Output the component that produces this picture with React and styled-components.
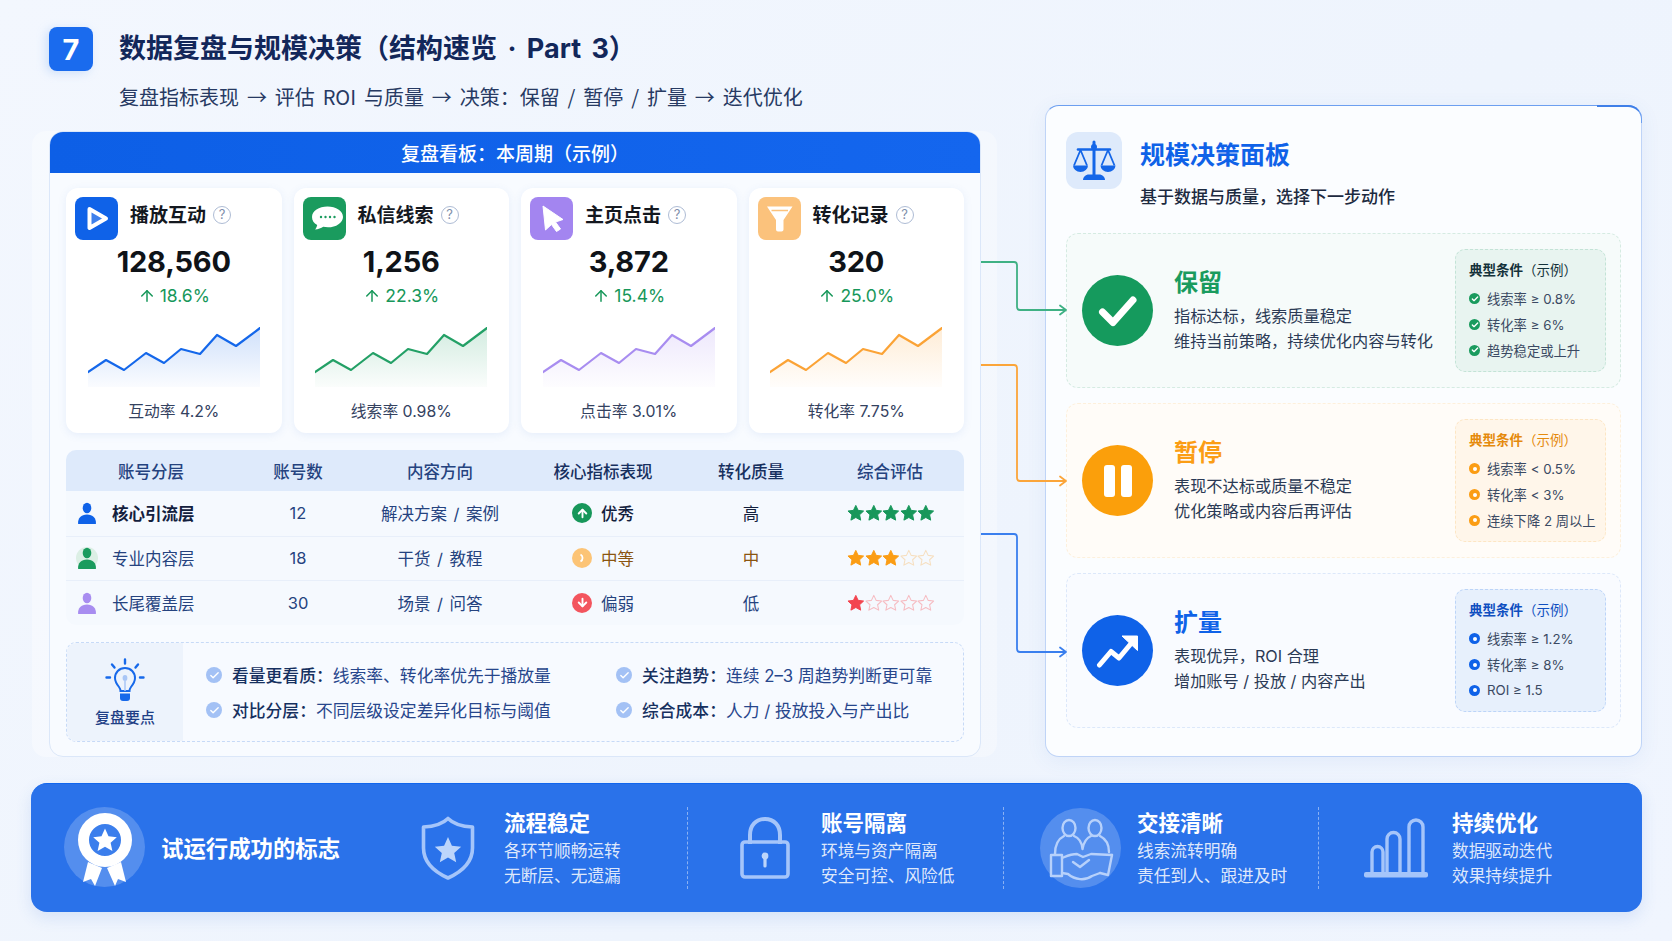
import React, { useId } from 'react';
import styled, { createGlobalStyle } from 'styled-components';
import { ArrowUp, ArrowDown, Check } from 'lucide-react';

const GlobalStyle = createGlobalStyle`
  html, body {
    margin: 0;
    padding: 0;
    background: #eff5fd;
  }
  * {
    box-sizing: border-box;
  }
  body {
    font-family: Inter, "Noto Sans CJK SC", "Noto Sans", sans-serif;
    color: #1b2a4a;
  }
`;

const Page = styled.div`
  width: 1672px;
  height: 941px;
  overflow: hidden;
  background: linear-gradient(135deg, #f3f7fe 0%, #eef4fd 60%, #f0f5fe 100%);
`;

const Header = styled.header`
  height: 105px;
  padding: 27px 0 0 49px;
`;

const TitleRow = styled.div`
  display: flex;
  align-items: center;
  gap: 26px;
`;

const StepBadge = styled.div`
  width: 44px;
  height: 44px;
  border-radius: 8px;
  background: #1a6bee;
  color: #fff;
  font-size: 29px;
  font-weight: 700;
  display: flex;
  align-items: center;
  justify-content: center;
  box-shadow: -3px 2px 10px rgba(150, 190, 245, 0.4);
`;

const Title = styled.h1`
  margin: 0;
  font-size: 27px;
  line-height: 44px;
  font-weight: 700;
  word-spacing: 4px;
  color: #12275a;
`;

const Subtitle = styled.p`
  margin: 17px 0 0 70px;
  font-family: "Noto Sans CJK SC", Inter, sans-serif;
  font-size: 20px;
  line-height: 18px;
  word-spacing: 3.4px;
  color: #273a63;
`;

const Main = styled.main`
  position: relative;
  display: flex;
  align-items: stretch;
  height: 652px;
  padding-left: 49px;
  gap: 64px;
`;

const Connectors = styled.svg`
  position: absolute;
  left: 0;
  top: 0;
  pointer-events: none;
  z-index: 2;
`;

const BoardPanel = styled.section`
  width: 932px;
  margin-top: 26px;
  border-radius: 14px;
  border: 1px solid #dbe7f9;
  background: #f8fbff;
  box-shadow: -17px 0 0 rgba(255, 255, 255, 0.35), 16px 0 0 rgba(255, 255, 255, 0.3);
  overflow: hidden;
`;

const BoardHeading = styled.div`
  height: 41px;
  background: linear-gradient(90deg, #0d5fe6, #1466ee);
  color: #fff;
  font-size: 19px;
  font-weight: 500;
  display: flex;
  align-items: center;
  justify-content: center;
`;

const BoardBody = styled.div`
  padding: 15px 16px 0;
`;

const KpiRow = styled.div`
  display: grid;
  grid-template-columns: repeat(4, 1fr);
  gap: 12px;
`;

const KpiCard = styled.article`
  height: 245px;
  padding-top: 9px;
  border-radius: 12px;
  background: #fff;
  box-shadow: 0 2px 8px rgba(70, 120, 210, 0.1);
  display: flex;
  flex-direction: column;
  align-items: center;
`;

const KpiHead = styled.div`
  align-self: stretch;
  display: flex;
  align-items: center;
  padding-left: 9px;
`;

const KpiIcon = styled.div`
  width: 43px;
  height: 43px;
  border-radius: 8px;
  background: ${p => p.$bg};
  flex: none;
  display: flex;
  margin-right: 12px;
`;

const KpiName = styled.span`
  font-size: 19px;
  font-weight: 700;
  color: #14181f;
  margin: 0 7px 10px 0;
`;

const HelpMark = styled.span`
  width: 18px;
  height: 18px;
  margin-bottom: 7px;
  border-radius: 50%;
  border: 1.6px solid #aebcd5;
  color: #7f8fab;
  font-size: 13px;
  line-height: 15px;
  text-align: center;
`;

const KpiValue = styled.div`
  margin-top: 5px;
  font-size: 29px;
  line-height: 34px;
  font-weight: 700;
  letter-spacing: -0.2px;
  color: #0f1318;
`;

const KpiDelta = styled.div`
  margin-top: 6px;
  font-size: 17.5px;
  line-height: 22px;
  color: #17975a;
  display: flex;
  align-items: center;
  gap: 4px;
`;

const ChartWrap = styled.svg`
  display: block;
  margin-top: 20px;
`;

const KpiFoot = styled.div`
  margin-top: 13px;
  font-size: 15.8px;
  line-height: 22px;
  color: #34425f;
`;

const AccountTable = styled.div`
  margin-top: 17px;
  border-radius: 10px;
  overflow: hidden;
  background: #f5f9fe;
`;

const TableLine = styled.div`
  display: grid;
  grid-template-columns: 170px 124px 160px 166px 130px 148px;
  align-items: center;
  height: ${p => (p.$head ? '41px' : '44.6px')};
  background: ${p => (p.$head ? '#deeafb' : 'transparent')};
  font-size: 16.5px;
  word-spacing: 2px;
  color: #25437f;
  font-weight: ${p => (p.$head ? 500 : 400)};
  & + & + & {
    border-top: 1px solid #e8effa;
  }
`;

const Cell = styled.div`
  text-align: center;
  color: ${p => p.$color || 'inherit'};
`;

const LayerCell = styled.div`
  display: flex;
  align-items: center;
  padding-left: 10px;
  gap: 14px;
  font-weight: ${p => (p.$strong ? 700 : 400)};
  color: ${p => (p.$strong ? '#13203d' : 'inherit')};
`;

const RatingCell = styled.div`
  display: flex;
  align-items: center;
  justify-content: center;
  gap: 9px;
  color: ${p => p.$color};
  font-weight: ${p => (p.$strong ? 500 : 400)};
`;

const RatingDot = styled.span`
  width: 20px;
  height: 20px;
  border-radius: 50%;
  background: ${p => p.$bg};
  color: #fff;
  display: flex;
  align-items: center;
  justify-content: center;
`;

const Stars = styled.div`
  display: flex;
  justify-content: center;
  padding-left: 2px;
`;

const TipBox = styled.div`
  margin-top: 17px;
  height: 100px;
  display: flex;
  border: 1.5px dashed #c7daf7;
  border-radius: 10px;
  background: #f7faff;
  overflow: hidden;
`;

const TipLabel = styled.div`
  width: 116px;
  flex: none;
  background: #edf3fc;
  display: flex;
  flex-direction: column;
  align-items: center;
  padding-top: 15px;
  font-size: 15px;
  font-weight: 500;
  color: #1f3f86;
  gap: 2px;
`;

const TipGrid = styled.div`
  flex: 1;
  display: grid;
  grid-template-columns: 410px 1fr;
  grid-auto-rows: 35px;
  align-content: center;
  padding: 2px 0 0 23px;
`;

const TipItem = styled.div`
  display: flex;
  align-items: center;
  gap: 10px;
  font-size: 16.8px;
  color: #27468c;
  white-space: nowrap;
  b {
    font-weight: 500;
    color: #16305f;
  }
`;

const TipCheck = styled.span`
  width: 16px;
  height: 16px;
  border-radius: 50%;
  background: #a3c1f5;
  color: #fff;
  display: flex;
  align-items: center;
  justify-content: center;
  flex: none;
`;

const DecisionPanel = styled.aside`
  position: relative;
  width: 597px;
  border-radius: 14px;
  border: 1px solid #bfd4f7;
  border-top: 1.5px solid #6c9ff0;
  background: #fbfdff;
  padding: 26px 20px 0;
  box-shadow: 0 4px 20px rgba(70, 120, 210, 0.08);
  &::before {
    content: '';
    position: absolute;
    top: -1.5px;
    right: -1px;
    width: 44px;
    height: 16px;
    border-top: 2px solid #3f7fe8;
    border-right: 1.5px solid #6c9ff0;
    border-radius: 0 14px 0 0;
  }
`;

const DecisionHead = styled.div`
  display: flex;
  align-items: flex-start;
  gap: 18px;
  margin-bottom: 24px;
`;

const ScaleBox = styled.div`
  width: 56px;
  height: 57px;
  border-radius: 12px;
  background: #deeafb;
  flex: none;
`;

const DecisionTitle = styled.h2`
  margin: 5px 0 0;
  font-size: 25px;
  line-height: 36px;
  font-weight: 700;
  color: #0f62e8;
`;

const DecisionSub = styled.p`
  margin: 12px 0 0;
  font-size: 17px;
  line-height: 24px;
  font-weight: 500;
  color: #1d2a40;
`;

const DecisionList = styled.div`
  display: flex;
  flex-direction: column;
  gap: 15px;
`;

const DecisionCard = styled.article`
  height: 155px;
  display: flex;
  align-items: center;
  padding: 0 14px 0 15px;
  border-radius: 12px;
  border: 1.5px dashed ${p => p.$line};
  background: ${p => p.$bg};
`;

const DecisionCircle = styled.div`
  width: 71px;
  height: 71px;
  border-radius: 50%;
  background: ${p => p.$bg};
  flex: none;
  display: flex;
  align-items: center;
  justify-content: center;
  margin-right: 21px;
`;

const DecisionBody = styled.div`
  flex: 1;
  margin-top: -1px;
`;

const DecisionName = styled.div`
  font-size: 24px;
  line-height: 32px;
  font-weight: 700;
  color: ${p => p.$color};
  margin-bottom: 5px;
`;

const DecisionLine = styled.div`
  font-size: 16.2px;
  line-height: 25px;
  color: #2b3a55;
  white-space: nowrap;
`;

const CondBox = styled.div`
  width: 151px;
  height: 123px;
  flex: none;
  border-radius: 10px;
  border: 1.5px dashed ${p => p.$line};
  background: ${p => p.$bg};
  padding: 10px 0 0 13px;
`;

const CondTitle = styled.div`
  font-size: 13.5px;
  line-height: 20px;
  color: ${p => p.$color};
  margin-bottom: 6px;
  white-space: nowrap;
  b {
    font-weight: 700;
  }
`;

const CondItem = styled.div`
  display: flex;
  align-items: center;
  gap: 7px;
  height: 25.7px;
  font-size: 13.3px;
  color: #3b4a63;
  white-space: nowrap;
`;

const CondDot = styled.span`
  width: 11px;
  height: 11px;
  border-radius: 50%;
  background: ${p => p.$bg};
  color: #fff;
  flex: none;
  display: flex;
  align-items: center;
  justify-content: center;
  ${p => !p.$tick && `
    &::after {
      content: '';
      width: 4px;
      height: 4px;
      border-radius: 50%;
      background: #fff;
    }
  `}
`;

const FooterBar = styled.footer`
  margin: 26px 0 0 31px;
  width: 1611px;
  height: 129px;
  border-radius: 16px;
  border-top: 1px solid #1166ee;
  background: #2a72ea;
  box-shadow: 0 6px 16px rgba(60, 110, 210, 0.14);
  display: flex;
  align-items: center;
  color: #fff;
`;

const FooterHero = styled.div`
  width: 340px;
  flex: none;
  display: flex;
  align-items: center;
  gap: 16px;
  padding: 0 0 2px 33px;
  font-size: 22.4px;
  font-weight: 700;
  white-space: nowrap;
`;

const Halo = styled.div`
  width: 81px;
  height: 80px;
  border-radius: 50%;
  background: ${p => (p.$on ? 'rgba(255, 255, 255, 0.2)' : 'transparent')};
  flex: none;
  display: flex;
  align-items: center;
  justify-content: center;
`;

const FooterItem = styled.div`
  width: ${p => p.$w}px;
  flex: none;
  display: flex;
  align-items: center;
  padding-left: 36px;
  gap: 16px;
`;

const FooterDivider = styled.div`
  width: 0;
  height: 82px;
  flex: none;
  border-left: 1px dashed rgba(255, 255, 255, 0.45);
`;

const FooterName = styled.div`
  font-size: 21.5px;
  line-height: 30px;
  font-weight: 700;
  margin-bottom: 1.5px;
`;

const FooterLine = styled.div`
  font-size: 16.7px;
  line-height: 24.5px;
  color: rgba(255, 255, 255, 0.86);
  white-space: nowrap;
`;

const CHART_POINTS = [[0, 45], [18, 33], [36, 43], [58, 26], [76, 36], [93, 22], [112, 27], [129, 8], [148, 19], [172, 1]];

function Sparkline({ color }) {
  const id = useId();
  const line = CHART_POINTS.map(p => p.join(',')).join(' ');
  return (
    <ChartWrap width="172" height="61" viewBox="0 0 172 61">
      <defs>
        <linearGradient id={id} x1="0" y1="0" x2="0" y2="1">
          <stop offset="0" stopColor={color} stopOpacity="0.2" />
          <stop offset="1" stopColor={color} stopOpacity="0.02" />
        </linearGradient>
      </defs>
      <polygon points={`0,60 ${line} 172,60`} fill={`url(#${id})`} />
      <polyline points={line} fill="none" stroke={color} strokeWidth="2.2" strokeLinejoin="round" strokeLinecap="round" />
    </ChartWrap>
  );
}

const PlayGlyph = () => (
  <svg width="43" height="43" viewBox="0 0 43 43">
    <path d="M14.5 12 L31 21.5 L14.5 31 Z" fill="rgba(255,255,255,0.2)" stroke="#fff" strokeWidth="4" strokeLinejoin="round" />
  </svg>
);

const ChatGlyph = () => (
  <svg width="43" height="43" viewBox="0 0 43 43">
    <path d="M24.5 9.5c8.500 0 15.500 4.600 15.500 10.400 0 5.800-7 10.400-15 10.400-1.700 0-3.300-.2-4.800-.5-2 1.400-5 2.600-8.200 2.800 1-1.200 1.900-2.800 2.200-4.600C10.900 26.300 9 23.300 9 19.900 9 14.100 16 9.500 24.500 9.500z" fill="#fff" />
    <g fill="#1a9b5e">
      <circle cx="18" cy="20" r="1.200" />
      <circle cx="22.500" cy="20" r="1.200" />
      <circle cx="27" cy="20" r="1.200" />
      <circle cx="31.500" cy="20" r="1.200" />
    </g>
  </svg>
);

const CursorGlyph = () => (
  <svg width="43" height="43" viewBox="0 0 43 43">
    <path d="M13 9 L33 22.500 L25.500 25 L30.500 32 L26.500 34.500 L21.500 27.500 L15.500 33 Z" fill="#fff" stroke="#fff" strokeWidth="1" strokeLinejoin="round" />
  </svg>
);

const FunnelGlyph = () => (
  <svg width="43" height="43" viewBox="0 0 43 43">
    <path d="M9 9.500h25.500l-9 13.500v9.500a2 2 0 0 1-2 2h-3.500a2 2 0 0 1-2-2V23z" fill="#fff" />
    <path d="M13.500 13.500h16.500" stroke="#fbc27c" strokeWidth="1.600" />
  </svg>
);

const PersonGlyph = ({ color, halo }) => (
  <svg width="22" height="22" viewBox="0 0 22 22">
    {halo && <ellipse cx="11" cy="11" rx="11" ry="11" fill={halo} />}
    <ellipse cx="11" cy="6" rx="4.300" ry="5.200" fill={color} />
    <path d="M2 21.500c0-5.500 3-9 9-9s9 3.500 9 9c0 .3-.2.500-.5.500h-17c-.3 0-.5-.2-.5-.5z" fill={color} />
  </svg>
);

const StarGlyph = ({ color, filled }) => (
  <svg width="17.600" height="18" viewBox="0 0 18 18">
    <path
      d="M9 1.200l2.400 5.100 5.600.7-4.100 3.800 1.100 5.500L9 13.600l-5 2.700 1.100-5.500L1 7l5.600-.7z"
      fill={filled ? color : 'none'}
      stroke={color}
      strokeWidth={filled ? 1 : 1.100}
      strokeLinejoin="round"
    />
  </svg>
);

const BulbGlyph = () => (
  <svg width="44" height="46" viewBox="0 0 44 46" fill="none">
    <path d="M22 10c-6 0-10 4.500-10 10 0 4 2 6.500 4 9 1 1.300 1.500 2.500 1.500 4h9c0-1.500.5-2.700 1.500-4 2-2.500 4-5 4-9 0-5.500-4-10-10-10z" stroke="#1769ea" strokeWidth="2" />
    <ellipse cx="22" cy="20" rx="2.400" ry="3" fill="#a9c6f6" />
    <path d="M22 23v10" stroke="#a9c6f6" strokeWidth="1.500" />
    <path d="M17 35.500h10v4.500a3 3 0 0 1-3 3h-4a3 3 0 0 1-3-3z" fill="#1769ea" />
    <path d="M22 1.500v4M9 6.500l2.500 3M35 6.500l-2.500 3M3.500 19.500h3.500M37 19.500h3.500" stroke="#1769ea" strokeWidth="2.400" strokeLinecap="round" />
  </svg>
);

const ScaleGlyph = () => (
  <svg width="56" height="57" viewBox="0 0 56 57" fill="none">
    <path d="M28 10v33" stroke="#1466e8" strokeWidth="3" strokeLinecap="round" />
    <path d="M12 17.500h32" stroke="#1466e8" strokeWidth="2.600" strokeLinecap="round" />
    <circle cx="28" cy="15" r="3" fill="#1466e8" />
    <path d="M14.500 18 L8 33.500M14.500 18 L21 33.500M42 18 L35.500 33.500M42 18 L48.500 33.500" stroke="#1466e8" strokeWidth="1.800" />
    <path d="M7 33.500h15a7.500 6.500 0 0 1-15 0zM34.500 33.500h15a7.500 6.500 0 0 1-15 0z" fill="#1466e8" />
    <path d="M17 48c0-3 2.500-5.500 6-5.500h10c3.500 0 6 2.500 6 5.500z" fill="#1466e8" />
  </svg>
);

const CheckGlyph = () => (
  <svg width="40" height="34" viewBox="0 0 40 34" fill="none">
    <path d="M4.500 18 L15 28.500 L35 6" stroke="#fff" strokeWidth="7" strokeLinecap="round" strokeLinejoin="round" />
  </svg>
);

const PauseGlyph = () => (
  <svg width="30" height="34" viewBox="0 0 30 34">
    <rect x="1" y="1" width="11" height="32" rx="3" fill="#fff" />
    <rect x="18" y="1" width="11" height="32" rx="3" fill="#fff" />
  </svg>
);

const GrowthGlyph = () => (
  <svg width="44" height="36" viewBox="0 0 44 36" fill="none">
    <path d="M3.500 32 L15 18.500 L23 25 L38 7" stroke="#fff" strokeWidth="5" strokeLinecap="round" strokeLinejoin="round" />
    <path d="M26 3h15.500v14.500z" fill="#fff" stroke="#fff" strokeLinejoin="round" />
  </svg>
);

const MedalGlyph = () => (
  <svg width="81" height="80" viewBox="0 0 81 80">
    <path d="M24 55 L38 61 L31 79 L27 72 L19 75 Z" fill="#fff" />
    <path d="M57 55 L43 61 L51 79 L54 72 L62 75 Z" fill="#fff" />
    <circle cx="41" cy="33" r="21.500" fill="#3b7eec" stroke="#fff" strokeWidth="11" />
    <path d="M41 21.500l3.500 7.800 8.300.9-6.200 5.600 1.800 8.200-7.400-4.300-7.400 4.300 1.800-8.200-6.200-5.600 8.300-.9z" fill="#fff" />
  </svg>
);

const ShieldGlyph = () => (
  <svg width="56" height="64" viewBox="0 0 56 64" fill="none">
    <path d="M28 2.500c5 5 13 8 24.500 8.500v21c0 14-9 23-24.500 30C12.500 55 3.500 46 3.500 32V11C15 10.500 23 7.500 28 2.500z" stroke="#a5c5fa" strokeWidth="3.600" strokeLinejoin="round" />
    <path d="M28 21l3.900 8.700 9.300 1-7 6.300 2 9.300-8.200-4.800-8.200 4.800 2-9.300-7-6.300 9.300-1z" fill="#bcd5fb" />
  </svg>
);

const LockGlyph = () => (
  <svg width="50" height="62" viewBox="0 0 50 62" fill="none">
    <path d="M10 27V18C10 8.500 16 2 25 2s15 6.500 15 16v9" stroke="#a5c5fa" strokeWidth="4" />
    <rect x="2" y="25" width="46" height="35" rx="3" stroke="#a5c5fa" strokeWidth="3.600" />
    <circle cx="25" cy="39" r="3.400" fill="#bcd5fb" />
    <path d="M25 40v9" stroke="#bcd5fb" strokeWidth="3.200" strokeLinecap="round" />
  </svg>
);

const HandshakeGlyph = () => (
  <svg width="81" height="80" viewBox="0 0 81 80" fill="none" stroke="#b7d1fb" strokeWidth="2.400" strokeLinejoin="round" strokeLinecap="round">
    <ellipse cx="29" cy="20" rx="6.500" ry="8" />
    <ellipse cx="55" cy="20" rx="6.500" ry="8" />
    <path d="M15 46c0-9 3-15 9-18M34 28c5 2 8 7 8.500 13M42.500 41c1-6 4-11 8.500-13M60 28c6 3 9 9 9 16" />
    <path d="M11 47h11v21H11z" />
    <path d="M72 47l-4 20-8-2" />
    <path d="M22 50c5-2 9-4 15-4l6 3 8-3 21 1" />
    <path d="M22 65l6 1c7 6 17 7 24 2l8-3" />
    <path d="M33 54l7 5 9-7" />
  </svg>
);

const BarsGlyph = () => (
  <svg width="66" height="60" viewBox="0 0 66 60" fill="none">
    <path d="M9 55V34a5.500 5.500 0 0 1 11 0v21M24 55V21a6.500 6.500 0 0 1 13 0v34M46 55V9a7 7 0 0 1 14 0v46" stroke="#a5c5fa" strokeWidth="3.400" />
    <rect x="1" y="54" width="64" height="5.500" rx="2" fill="#a5c5fa" />
  </svg>
);

const KPIS = [
  { name: '播放互动', value: '128,560', delta: '18.6%', foot: '互动率 4.2%', bg: '#0f62e8', color: '#1467ea', icon: <PlayGlyph /> },
  { name: '私信线索', value: '1,256', delta: '22.3%', foot: '线索率 0.98%', bg: '#1a9b5e', color: '#23a066', icon: <ChatGlyph /> },
  { name: '主页点击', value: '3,872', delta: '15.4%', foot: '点击率 3.01%', bg: '#a385f0', color: '#a88df0', icon: <CursorGlyph /> },
  { name: '转化记录', value: '320', delta: '25.0%', foot: '转化率 7.75%', bg: '#fbc27c', color: '#fba336', icon: <FunnelGlyph /> },
];

const LAYERS = [
  {
    name: '核心引流层', count: '12', dir: '解决方案 / 案例', rating: '优秀', quality: '高', strong: true,
    person: '#0f62e8', dot: '#17975a', ratingColor: '#13203d', qualityColor: '#13203d',
    starColor: '#17975a', offColor: '#17975a', filled: 5,
    mark: <ArrowUp size={13} strokeWidth={3.500} />,
  },
  {
    name: '专业内容层', count: '18', dir: '干货 / 教程', rating: '中等', quality: '中',
    person: '#1a9b5e', halo: '#dcefe5', dot: '#fcc476', ratingColor: '#8a5510', qualityColor: '#8a5510',
    starColor: '#fb9d14', offColor: '#f6dfc0', filled: 3,
    mark: <svg width="10" height="10" viewBox="0 0 10 10" fill="none"><path d="M3.500 1.500a4 4 0 0 1 0 7" stroke="#fff" strokeWidth="1.800" /></svg>,
  },
  {
    name: '长尾覆盖层', count: '30', dir: '场景 / 问答', rating: '偏弱', quality: '低',
    person: '#a88df0', dot: '#f3555e', ratingColor: '#25437f', qualityColor: '#25437f',
    starColor: '#f3454f', offColor: '#f6bcc2', filled: 1,
    mark: <ArrowDown size={13} strokeWidth={3.500} />,
  },
];

const TIPS = [
  ['看量更看质', '线索率、转化率优先于播放量'],
  ['关注趋势', '连续 2–3 周趋势判断更可靠'],
  ['对比分层', '不同层级设定差异化目标与阈值'],
  ['综合成本', '人力 / 投放投入与产出比'],
];

const DECISIONS = [
  {
    name: '保留', color: '#1a9b5e', line: '#d5ebe2', bg: '#f6fbfa',
    condLine: '#c3e3d6', condBg: '#e8f4f0', condColor: '#14323a', dot: '#1a9b5e', tick: true,
    circle: '#159a5d', glyph: <CheckGlyph />,
    lines: ['指标达标，线索质量稳定', '维持当前策略，持续优化内容与转化'],
    conds: ['线索率 ≥ 0.8%', '转化率 ≥ 6%', '趋势稳定或上升'],
  },
  {
    name: '暂停', color: '#fb9d14', line: '#fdf0dc', bg: '#fffcf8',
    condLine: '#fde6c4', condBg: '#fff6ea', condColor: '#e58a0c', dot: '#fb9d14',
    circle: '#fb9f0b', glyph: <PauseGlyph />,
    lines: ['表现不达标或质量不稳定', '优化策略或内容后再评估'],
    conds: ['线索率 < 0.5%', '转化率 < 3%', '连续下降 2 周以上'],
  },
  {
    name: '扩量', color: '#0f62e8', line: '#dce8fa', bg: '#f9fbff',
    condLine: '#bcd4f8', condBg: '#e7f0fc', condColor: '#0f4fc0', dot: '#0f62e8',
    circle: '#0f62e8', glyph: <GrowthGlyph />,
    lines: ['表现优异，ROI 合理', '增加账号 / 投放 / 内容产出'],
    conds: ['线索率 ≥ 1.2%', '转化率 ≥ 8%', 'ROI ≥ 1.5'],
  },
];

const FOOTER_ITEMS = [
  { w: 316, name: '流程稳定', lines: ['各环节顺畅运转', '无断层、无遗漏'], glyph: <ShieldGlyph /> },
  { w: 315, name: '账号隔离', lines: ['环境与资产隔离', '安全可控、风险低'], glyph: <LockGlyph /> },
  { w: 314, name: '交接清晰', lines: ['线索流转明确', '责任到人、跟进及时'], glyph: <HandshakeGlyph />, halo: true },
  { w: 323, name: '持续优化', lines: ['数据驱动迭代', '效果持续提升'], glyph: <BarsGlyph /> },
];

function ConnectorLine({ d, color, y }) {
  return (
    <g fill="none" stroke={color} strokeWidth="1.800" strokeLinejoin="round">
      <path d={d} />
      <path d={`M1060 ${y - 4.500} L1066 ${y} L1060 ${y + 4.500}`} strokeLinecap="round" />
    </g>
  );
}

function App() {
  return (
    <Page>
      <GlobalStyle />
      <Header>
        <TitleRow>
          <StepBadge>7</StepBadge>
          <Title>数据复盘与规模决策（结构速览 · Part 3）</Title>
        </TitleRow>
        <Subtitle>复盘指标表现 → 评估 ROI 与质量 → 决策：保留 / 暂停 / 扩量 → 迭代优化</Subtitle>
      </Header>

      <Main>
        <BoardPanel>
          <BoardHeading>复盘看板：本周期（示例）</BoardHeading>
          <BoardBody>
            <KpiRow>
              {KPIS.map(k => (
                <KpiCard key={k.name}>
                  <KpiHead>
                    <KpiIcon $bg={k.bg}>{k.icon}</KpiIcon>
                    <KpiName>{k.name}</KpiName>
                    <HelpMark>?</HelpMark>
                  </KpiHead>
                  <KpiValue>{k.value}</KpiValue>
                  <KpiDelta><ArrowUp size={18} strokeWidth={2} />{k.delta}</KpiDelta>
                  <Sparkline color={k.color} />
                  <KpiFoot>{k.foot}</KpiFoot>
                </KpiCard>
              ))}
            </KpiRow>

            <AccountTable>
              <TableLine $head>
                <Cell>账号分层</Cell>
                <Cell>账号数</Cell>
                <Cell>内容方向</Cell>
                <Cell $color="#17305f">核心指标表现</Cell>
                <Cell $color="#17305f">转化质量</Cell>
                <Cell>综合评估</Cell>
              </TableLine>
              {LAYERS.map(l => (
                <TableLine key={l.name}>
                  <LayerCell $strong={l.strong}>
                    <PersonGlyph color={l.person} halo={l.halo} />
                    {l.name}
                  </LayerCell>
                  <Cell>{l.count}</Cell>
                  <Cell>{l.dir}</Cell>
                  <RatingCell $color={l.ratingColor} $strong={l.strong}>
                    <RatingDot $bg={l.dot}>{l.mark}</RatingDot>
                    {l.rating}
                  </RatingCell>
                  <Cell $color={l.qualityColor}>{l.quality}</Cell>
                  <Stars>
                    {[0, 1, 2, 3, 4].map(i => (
                      <StarGlyph key={i} filled={i < l.filled} color={i < l.filled ? l.starColor : l.offColor} />
                    ))}
                  </Stars>
                </TableLine>
              ))}
            </AccountTable>

            <TipBox>
              <TipLabel>
                <BulbGlyph />
                复盘要点
              </TipLabel>
              <TipGrid>
                {TIPS.map(t => (
                  <TipItem key={t[0]}>
                    <TipCheck><Check size={11} strokeWidth={3} /></TipCheck>
                    <span><b>{t[0]}：</b>{t[1]}</span>
                  </TipItem>
                ))}
              </TipGrid>
            </TipBox>
          </BoardBody>
        </BoardPanel>

        <DecisionPanel>
          <DecisionHead>
            <ScaleBox><ScaleGlyph /></ScaleBox>
            <div>
              <DecisionTitle>规模决策面板</DecisionTitle>
              <DecisionSub>基于数据与质量，选择下一步动作</DecisionSub>
            </div>
          </DecisionHead>
          <DecisionList>
            {DECISIONS.map(d => (
              <DecisionCard key={d.name} $line={d.line} $bg={d.bg}>
                <DecisionCircle $bg={d.circle}>{d.glyph}</DecisionCircle>
                <DecisionBody>
                  <DecisionName $color={d.color}>{d.name}</DecisionName>
                  {d.lines.map(t => <DecisionLine key={t}>{t}</DecisionLine>)}
                </DecisionBody>
                <CondBox $line={d.condLine} $bg={d.condBg}>
                  <CondTitle $color={d.condColor}><b>典型条件</b>（示例）</CondTitle>
                  {d.conds.map(c => (
                    <CondItem key={c}>
                      <CondDot $bg={d.dot} $tick={d.tick}>{d.tick && <Check size={8} strokeWidth={4} />}</CondDot>
                      {c}
                    </CondItem>
                  ))}
                </CondBox>
              </DecisionCard>
            ))}
          </DecisionList>
        </DecisionPanel>

        <Connectors width="1672" height="652" viewBox="0 0 1672 652">
          <ConnectorLine color="#3fb184" d="M981 157 H1014 Q1017 157 1017 160 V202 Q1017 205 1020 205 H1066" y={205} />
          <ConnectorLine color="#fba53a" d="M981 260 H1014 Q1017 260 1017 263 V373 Q1017 376 1020 376 H1066" y={376} />
          <ConnectorLine color="#3a7fee" d="M981 429 H1014 Q1017 429 1017 432 V544 Q1017 547 1020 547 H1066" y={547} />
        </Connectors>
      </Main>

      <FooterBar>
        <FooterHero>
          <Halo $on><MedalGlyph /></Halo>
          试运行成功的标志
        </FooterHero>
        {FOOTER_ITEMS.map((f, i) => (
          <React.Fragment key={f.name}>
            {i > 0 && <FooterDivider />}
            <FooterItem $w={f.w}>
              <Halo $on={f.halo}>{f.glyph}</Halo>
              <div>
                <FooterName>{f.name}</FooterName>
                {f.lines.map(t => <FooterLine key={t}>{t}</FooterLine>)}
              </div>
            </FooterItem>
          </React.Fragment>
        ))}
      </FooterBar>
    </Page>
  );
}

export default App;
